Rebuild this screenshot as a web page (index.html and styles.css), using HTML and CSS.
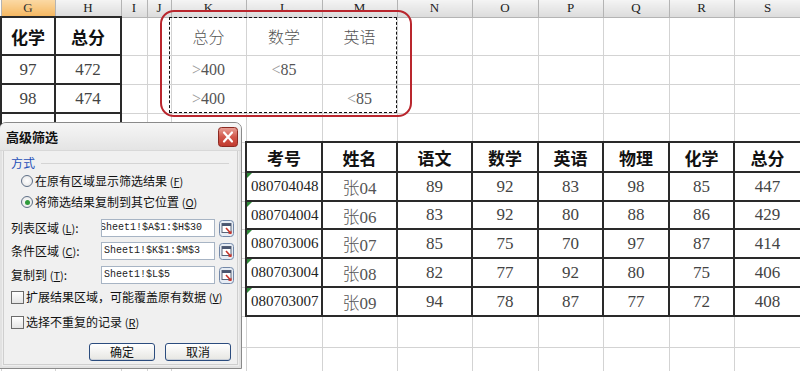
FILE: index.html
```html
<!DOCTYPE html>
<html lang="zh">
<head>
<meta charset="utf-8">
<link rel="stylesheet" href="styles.css">
</head>
<body>
<div class="sheet">
  <table class="grid">
    <colgroup>
      <col class="w54"><col class="w66"><col class="w26"><col class="w24"><col class="w75"><col class="w76"><col class="w75"><col class="w75"><col class="w66"><col class="w65"><col class="w66"><col class="w65"><col class="w67">
    </colgroup>
    <tr class="hdr">
      <th class="sel">G</th><th>H</th><th>I</th><th>J</th><th>K</th><th>L</th><th>M</th><th>N</th><th>O</th><th>P</th><th>Q</th><th>R</th><th>S</th>
    </tr>
    <tr class="r38">
      <td class="b hd">化学</td><td class="b hd">总分</td><td></td><td></td>
      <td class="crit">总分</td><td class="crit">数学</td><td class="crit">英语</td>
      <td></td><td></td><td></td><td></td><td></td><td></td>
    </tr>
    <tr class="r29">
      <td class="b num">97</td><td class="b num">472</td><td></td><td></td>
      <td class="crit"><span class="op">&gt;</span>400</td><td class="crit"><span class="op">&lt;</span>85</td><td class="crit"></td>
      <td></td><td></td><td></td><td></td><td></td><td></td>
    </tr>
    <tr class="r29">
      <td class="b num">98</td><td class="b num">474</td><td></td><td></td>
      <td class="crit"><span class="op">&gt;</span>400</td><td class="crit"></td><td class="crit"><span class="op">&lt;</span>85</td>
      <td></td><td></td><td></td><td></td><td></td><td></td>
    </tr>
    <tr class="r29">
      <td class="b"></td><td class="b"></td><td></td><td></td><td></td><td></td><td></td><td></td><td></td><td></td><td></td><td></td><td></td>
    </tr>
    <tr class="r30">
      <td></td><td></td><td></td><td></td><td></td>
      <td class="b hd">考号</td><td class="b hd">姓名</td><td class="b hd">语文</td><td class="b hd">数学</td><td class="b hd">英语</td><td class="b hd">物理</td><td class="b hd">化学</td><td class="b hd">总分</td>
    </tr>
    <tr class="r29">
      <td></td><td></td><td></td><td></td><td></td>
      <td class="b id">080704048</td><td class="b nm">张04</td><td class="b num">89</td><td class="b num">92</td><td class="b num">83</td><td class="b num">98</td><td class="b num">85</td><td class="b num">447</td>
    </tr>
    <tr class="r28">
      <td></td><td></td><td></td><td></td><td></td>
      <td class="b id">080704004</td><td class="b nm">张06</td><td class="b num">83</td><td class="b num">92</td><td class="b num">80</td><td class="b num">88</td><td class="b num">86</td><td class="b num">429</td>
    </tr>
    <tr class="r29">
      <td></td><td></td><td></td><td></td><td></td>
      <td class="b id">080703006</td><td class="b nm">张07</td><td class="b num">85</td><td class="b num">75</td><td class="b num">70</td><td class="b num">97</td><td class="b num">87</td><td class="b num">414</td>
    </tr>
    <tr class="r29">
      <td></td><td></td><td></td><td></td><td></td>
      <td class="b id">080703004</td><td class="b nm">张08</td><td class="b num">82</td><td class="b num">77</td><td class="b num">92</td><td class="b num">80</td><td class="b num">75</td><td class="b num">406</td>
    </tr>
    <tr class="r29">
      <td></td><td></td><td></td><td></td><td></td>
      <td class="b id">080703007</td><td class="b nm">张09</td><td class="b num">94</td><td class="b num">78</td><td class="b num">87</td><td class="b num">77</td><td class="b num">72</td><td class="b num">408</td>
    </tr>
    <tr class="r31">
      <td></td><td></td><td></td><td></td><td></td><td></td><td></td><td></td><td></td><td></td><td></td><td></td><td></td>
    </tr>
    <tr class="r29">
      <td></td><td></td><td></td><td></td><td></td><td></td><td></td><td></td><td></td><td></td><td></td><td></td><td></td>
    </tr>
  </table>

  <div class="marquee"></div>
  <div class="redbox"></div>

  <div class="dlg">
    <div class="dlg-title">
      <span class="dlg-caption">高级筛选</span>
      <span class="close">
        <svg width="20" height="20" viewBox="0 0 20 20">
          <defs>
            <linearGradient id="cg" x1="0" y1="0" x2="0" y2="1">
              <stop offset="0" stop-color="#e9a39a"/>
              <stop offset="0.5" stop-color="#d2574a"/>
              <stop offset="1" stop-color="#c0392e"/>
            </linearGradient>
          </defs>
          <rect x="0.5" y="0.5" width="19" height="19" rx="3" fill="url(#cg)" stroke="#8c2a22"/>
          <path d="M6 5.5 L14 14.5 M14 5.5 L6 14.5" stroke="#fff" stroke-width="2.2" stroke-linecap="round"/>
        </svg>
      </span>
    </div>
    <div class="dlg-body">
      <div class="group"><span class="group-label">方式</span><span class="group-line"></span></div>
      <div class="opt m1"><span class="radio"></span><span>在原有区域显示筛选结果 <span class="key">(<u>F</u>)</span></span></div>
      <div class="opt m3"><span class="radio on"></span><span>将筛选结果复制到其它位置 <span class="key">(<u>O</u>)</span></span></div>
      <div class="field m7"><span class="flabel">列表区域 <span class="key">(<u>L</u>)</span>:</span><span class="input"><span class="scrolled">Sheet1!$A$1:$H$30</span></span><span class="pick"><svg width="15" height="17" viewBox="0 0 15 17"><rect x="0.5" y="0.5" width="14" height="16" rx="3" fill="#e6ecf4" stroke="#7388a8"/><rect x="3" y="3.5" width="9" height="9" fill="#fff" stroke="#5a6478"/><rect x="3" y="3.5" width="9" height="2.5" fill="#4a5670"/><path d="M7 8 L12 13.5" stroke="#c8342a" stroke-width="1.6"/><path d="M12.5 14 L12.5 10.5 L9 13.8 Z" fill="#c8342a"/></svg></span></div>
      <div class="field m3"><span class="flabel">条件区域 <span class="key">(<u>C</u>)</span>:</span><span class="input">Sheet1!$K$1:$M$3</span><span class="pick"><svg width="15" height="17" viewBox="0 0 15 17"><rect x="0.5" y="0.5" width="14" height="16" rx="3" fill="#e6ecf4" stroke="#7388a8"/><rect x="3" y="3.5" width="9" height="9" fill="#fff" stroke="#5a6478"/><rect x="3" y="3.5" width="9" height="2.5" fill="#4a5670"/><path d="M7 8 L12 13.5" stroke="#c8342a" stroke-width="1.6"/><path d="M12.5 14 L12.5 10.5 L9 13.8 Z" fill="#c8342a"/></svg></span></div>
      <div class="field m4"><span class="flabel">复制到 <span class="key">(<u>T</u>)</span>:</span><span class="input">Sheet1!$L$5</span><span class="pick"><svg width="15" height="17" viewBox="0 0 15 17"><rect x="0.5" y="0.5" width="14" height="16" rx="3" fill="#e6ecf4" stroke="#7388a8"/><rect x="3" y="3.5" width="9" height="9" fill="#fff" stroke="#5a6478"/><rect x="3" y="3.5" width="9" height="2.5" fill="#4a5670"/><path d="M7 8 L12 13.5" stroke="#c8342a" stroke-width="1.6"/><path d="M12.5 14 L12.5 10.5 L9 13.8 Z" fill="#c8342a"/></svg></span></div>
      <div class="chk m3"><span class="box"></span><span>扩展结果区域，可能覆盖原有数据 <span class="key">(<u>V</u>)</span></span></div>
      <div class="chk m7"><span class="box"></span><span>选择不重复的记录 <span class="key">(<u>R</u>)</span></span></div>
      <div class="btns"><span class="btn">确定</span><span class="btn">取消</span></div>
    </div>
  </div>
</div>
</body>
</html>
```

FILE: styles.css
```css
* { box-sizing: border-box; }
html, body { margin: 0; padding: 0; }
body {
  width: 800px;
  height: 371px;
  overflow: hidden;
  background: #fff;
  font-family: "Noto Sans CJK SC", sans-serif;
}
.sheet { position: relative; width: 800px; height: 371px; overflow: hidden; }

.grid { border-collapse: collapse; table-layout: fixed; width: 801px; }
.w54 { width: 54px; } .w66 { width: 66px; } .w26 { width: 26px; } .w24 { width: 24px; }
.w75 { width: 75px; } .w76 { width: 76px; } .w65 { width: 65px; } .w67 { width: 67px; }

.hdr { height: 17px; }
.hdr th {
  padding: 0;
  font: normal 13px/16px "Liberation Serif", serif;
  color: #222;
  background: linear-gradient(#f4f4f4, #dcdcdc);
  border: 1px solid #b4b4b4;
  border-top: none;
}
.hdr th.sel { background: linear-gradient(#fbd9a4, #f5b862); color: #333; }

.r38 { height: 38px; } .r31 { height: 31px; } .r30 { height: 30px; }
.r29 { height: 29px; } .r28 { height: 28px; }

.grid td {
  border: 1px solid #d3d3d3;
  padding: 0;
  text-align: center;
  vertical-align: middle;
  color: #3a3a3a;
  white-space: nowrap;
  overflow: hidden;
  position: relative;
}
.grid td.b { border: 2px solid #2a2a2a; }
.grid td.hd { font: bold 17px "Noto Sans CJK SC", sans-serif; color: #111; }
.grid td.num { font: 17px "Liberation Serif", serif; color: #444; }
.grid td.nm { font: 17px "Liberation Serif", "Noto Sans CJK SC", serif; color: #555; }
.grid td.nm::first-letter { font-weight: 300; }
.grid td.id {
  font: 15px "Liberation Serif", serif;
  color: #222;
  text-align: left;
  padding-left: 4px;
}
.grid td.id::before {
  content: "";
  position: absolute;
  left: 0; top: 0;
  border-top: 5px solid #2f8a3a;
  border-right: 5px solid transparent;
}
.grid td.crit { font: 300 16px "Liberation Serif", "Noto Sans CJK SC", serif; color: #555; }
.op { color: #9a9a9a; }

.marquee {
  position: absolute;
  left: 169px; top: 17px;
  width: 228px; height: 96px;
  border: 1px dashed #111;
}
.redbox {
  position: absolute;
  left: 160px; top: 10px;
  width: 252px; height: 107px;
  border: 2.5px solid #b9262d;
  border-radius: 14px;
}

/* dialog */
.dlg {
  position: absolute;
  left: -1px; top: 122px;
  width: 243px; height: 247px;
  border: 1px solid #8a8a8a;
  border-radius: 7px 7px 0 0;
  background: #eeeeee;
  box-shadow: inset 0 0 0 2px #e2e2e2;
  font: 12px/16px "Noto Sans CJK SC", sans-serif;
  color: #111;
}
.dlg-title {
  height: 28px;
  display: flex;
  align-items: center;
  justify-content: space-between;
  padding: 0 3px 0 6px;
  background: linear-gradient(#f6f6f6, #e4e4e4);
  border-radius: 6px 6px 0 0;
  border-bottom: 1px solid #d8d8d8;
}
.dlg-caption { font: bold 13px "Noto Sans CJK SC", sans-serif; color: #111; }
.close { display: flex; }
.dlg-body {
  margin: 0 3px;
  height: 214px;
  background: #f0f0f0;
  border: 1px solid #cfcfcf;
  border-top: none;
  padding: 4px 0 0 0;
  display: flex;
  flex-direction: column;
}
.key { font-size: 11px; }
.group { display: flex; align-items: center; height: 16px; padding-left: 7px; }
.group-label { color: #1f4fb8; }
.group-line { flex: 1; height: 1px; background: #d4d4d4; margin: 0 8px 0 6px; }
.opt, .chk { display: flex; align-items: center; height: 18px; }
.opt { padding-left: 17px; }
.chk { padding-left: 7px; }
.m1 { margin-top: 1px; } .m3 { margin-top: 3px; } .m4 { margin-top: 4px; } .m7 { margin-top: 7px; }
.radio {
  width: 12px; height: 12px;
  border-radius: 50%;
  border: 1px solid #5e6f86;
  background: radial-gradient(#ffffff, #e2e2e2);
  margin-right: 2px;
  display: flex; align-items: center; justify-content: center;
}
.radio.on::after {
  content: "";
  width: 5px; height: 5px; border-radius: 50%;
  background: #2f9a3a;
}
.box {
  width: 13px; height: 13px;
  border: 1px solid #6b6b6b;
  background: linear-gradient(#ffffff, #e4e4e4);
  margin-right: 2px;
}
.field { display: flex; align-items: center; height: 20px; padding-left: 7px; }
.flabel { width: 90px; }
.input {
  width: 114px; height: 18px;
  border: 1px solid #a7b4c4;
  background: #fff;
  font: 10px/16px "Liberation Mono", monospace;
  color: #222;
  padding-left: 2px;
  overflow: hidden;
  white-space: nowrap;
}
.scrolled { margin-left: -4px; }
.pick { display: flex; margin-left: 4px; }
.btns { display: flex; justify-content: flex-end; gap: 10px; margin-top: 12px; padding-right: 6px; }
.btn {
  width: 66px; height: 18px;
  border: 1px solid #2b4c7e;
  border-radius: 3px;
  background: linear-gradient(#ffffff, #e6e6e2);
  box-shadow: inset 0 -1px 0 #c9cfd8;
  text-align: center;
  font: 12px/16px "Noto Sans CJK SC", sans-serif;
  color: #111;
}
```
